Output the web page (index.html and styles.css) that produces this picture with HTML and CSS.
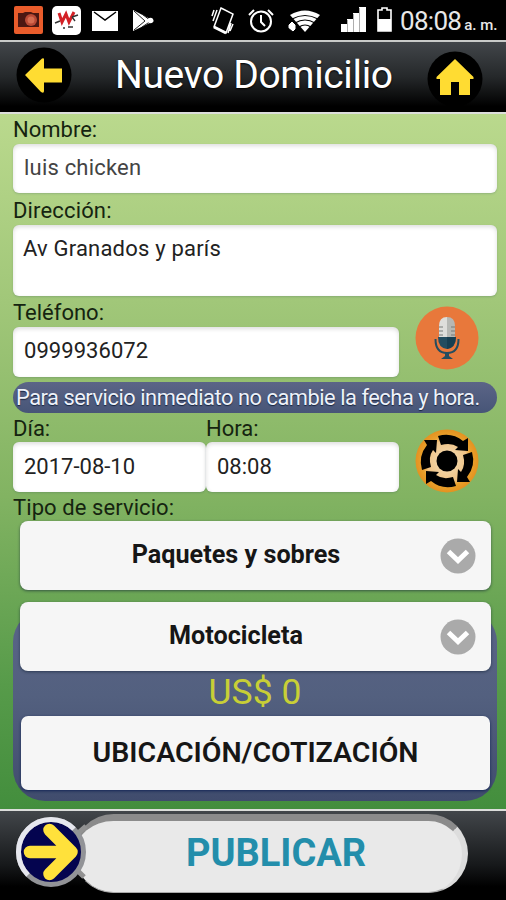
FILE: index.html
```html
<!DOCTYPE html>
<html lang="es">
<head>
<meta charset="utf-8">
<title>Nuevo Domicilio</title>
<link rel="stylesheet" href="styles.css">
</head>
<body>
<div class="app">
<div class="status">
  <svg class="status-icons" width="396" height="40" viewBox="0 0 396 40" aria-hidden="true">
    <rect x="14" y="6" width="29" height="28" rx="2" fill="#e95c2b"/>
    <path d="M18 13h5l2-1h6l2 1h6v14H18z" fill="#4c1712"/>
    <circle cx="31" cy="20" r="6" fill="#b94935"/><circle cx="31" cy="20" r="3.500" fill="#d66c51"/>
    <rect x="52" y="6" width="29" height="29" rx="5" fill="#fff"/>
    <path d="M59 13l3 9 4-8 3 8 5-10" fill="none" stroke="#d32026" stroke-width="3"/>
    <path d="M55 23l5-2M72 17l6-2M72 17l3 4M63 28h2M68 27h5" stroke="#333" stroke-width="1.400"/>
    <rect x="92" y="11" width="26" height="20" fill="#fff"/><path d="M94 12l11 8 11-8" fill="none" stroke="#000" stroke-width="1.500"/>
    <path d="M133 10v21l21-10z" fill="#fff"/><path d="M134 11l11 10-11 9M142 14l9 7-9 6" fill="none" stroke="#222" stroke-width="1"/><circle cx="150.500" cy="20.500" r="2.800" fill="#fff"/>
    <g fill="none" stroke="#fff" stroke-width="1.500"><path d="M221 8l12 6-7 19-12-6zM214 10l-2 6M217 10l-4 11M231 23l-3 10M233 24l-3 7"/><path d="M214 27l12 6" stroke-width="3"/></g>
    <g fill="none" stroke="#fff" stroke-width="2"><circle cx="261" cy="21.500" r="10"/><path d="M261 15v7l4 4M249 15l5-5M268 10l5 5"/></g>
    <path d="M290 15q15-9 30 0l-15 17z" fill="#fff"/><path d="M292 19q13-7 26 0M295 23q10-6 20 0M299 27q6-4 12 0" fill="none" stroke="#000" stroke-width="1.200"/>
    <path d="M288 25l4-4 4 4v4l-3 3-5-4z" fill="#fff" stroke="#000"/>
    <path d="M341 32v-8h6v8zm6 0V19h6v13zm6 0V13h6v19zm6 0V7h7v25z" fill="#fff"/><path d="M359.500 8v24M353.500 14v18M347.500 20v12" stroke="#777" stroke-width=".6"/>
    <path d="M378 10h4V8h5v2h4v21h-13z" fill="none" stroke="#fff" stroke-width="1.600"/><path d="M378 19h13v12h-13z" fill="#fff"/>
  </svg>
  <span class="clock">08:08</span><span class="ampm">a. m.</span>
</div>
<header class="header">
  <svg class="back" width="56" height="56" viewBox="0 0 56 56"><circle cx="28" cy="28" r="27.500" fill="#000"/><path d="M9 28L26 11.500q2-1 2 1V21.500h18v14H28v8.500q0 3-3 1z" fill="#ffdc32"/></svg>
  <h1 class="title">Nuevo Domicilio</h1>
  <svg class="home" width="56" height="56" viewBox="0 0 56 56"><circle cx="28" cy="28" r="27.500" fill="#000"/><path d="M28 8L9.500 26v2H13v16h11V31h8v13h11V28h3.500v-2z" fill="#ffdc32"/></svg>
</header>
<main class="form">
  <label class="label">Nombre:</label>
  <div class="field name"><span>luis chicken</span></div>
  <label class="label l-dir">Dirección:</label>
  <div class="field area"><span>Av Granados y parís</span></div>
  <div class="row phone-row">
    <div class="phone-col"><label class="label l-tel">Teléfono:</label><div class="field phone"><span>0999936072</span></div></div>
    <svg class="round mic" width="64" height="64" viewBox="0 0 64 64"><circle cx="32" cy="32" r="31.500" fill="#e8783b"/><path d="M24 31V20q0-9 8-9v20z" fill="#dededb"/><path d="M32 11q8 0 8 9v11h-8z" fill="#b6b8b4"/><path d="M24 21h4m-4 4h4m-4 4h4m8-8h4m-4 4h4m-4 4h4" stroke="#777b78"/><path d="M23 31h18q0 11-9 12-9-1-9-12z" fill="#234d60"/><path d="M32 31h9q-1 11-9 12z" fill="#173f52"/><path d="M20.500 33q0 14 11.500 14t11.500-14" fill="none" stroke="#234d60" stroke-width="2"/><path d="M30 46h4v4l4 3H26l4-3z" fill="#234d60"/></svg>
  </div>
  <div class="notice">Para servicio inmediato no cambie la fecha y hora.</div>
  <div class="row date-row">
    <div class="col"><label class="label l-date">Día:</label><div class="field date"><span>2017-08-10</span></div></div>
    <div class="col"><label class="label l-date">Hora:</label><div class="field time"><span>08:08</span></div></div>
    <svg class="round refresh" width="64" height="64" viewBox="0 0 64 64"><defs><radialGradient id="gold"><stop offset=".3" stop-color="#f2d3a3"/><stop offset=".65" stop-color="#eec285"/><stop offset=".8" stop-color="#e9a02b"/><stop offset="1" stop-color="#e39220"/></radialGradient><path id="turn" d="M23 7q14-4 25 5l5-3v13l-13-1 3-3q-7-5-17-2z"/></defs><circle cx="32" cy="32" r="31.500" fill="url(#gold)"/><use href="#turn"/><use href="#turn" transform="rotate(90 32 32)"/><use href="#turn" transform="rotate(180 32 32)"/><use href="#turn" transform="rotate(270 32 32)"/><circle cx="32" cy="32" r="10.500"/></svg>
  </div>
  <label class="label l-type">Tipo de servicio:</label>
  <div class="select"><span class="t-pack">Paquetes y sobres</span><svg class="chevron" width="36" height="36" viewBox="0 0 36 36"><circle cx="18" cy="18" r="17.500" fill="#aaa"/><path d="M8.500 13.500l9.500 9 9.500-9" fill="none" stroke="#fff" stroke-width="5"/></svg></div>
  <section class="quote">
    <div class="select moto"><span class="t-moto">Motocicleta</span><svg class="chevron" width="36" height="36" viewBox="0 0 36 36"><circle cx="18" cy="18" r="17.500" fill="#aaa"/><path d="M8.500 13.500l9.500 9 9.500-9" fill="none" stroke="#fff" stroke-width="5"/></svg></div>
    <div class="price"><span>US$ 0</span></div>
    <div class="locate"><span>UBICACIÓN/COTIZACIÓN</span></div>
  </section>
</main>
<footer class="footer">
  <div class="publish"><span>PUBLICAR</span></div>
  <svg class="go" width="90" height="80" viewBox="0 0 90 80"><path d="M63 22l9-8M63 58l7 7" stroke="#929292" stroke-width="5"/><circle cx="37" cy="40" r="32.500" fill="#04044f" stroke="#929397" stroke-width="5"/><path d="M14 63A32.500 32.500 0 0 1 60 17" fill="none" stroke="#e6e7ee" stroke-width="5"/><path d="M16 40h36M35.500 18l22 22-22 22" fill="none" stroke="#ffe13b" stroke-width="12.500" stroke-linejoin="round" stroke-linecap="round"/></svg>
</footer>
</div>
</body>
</html>
```
FILE: styles.css
```css
* { box-sizing: border-box; }
body { margin: 0; font-family: Roboto, "Liberation Sans", sans-serif; color: #152410; }
.app { width: 506px; height: 900px; overflow: hidden; background: #000; display: flex; flex-direction: column; white-space: nowrap; }
.status { height: 40px; flex: none; display: flex; align-items: baseline; color: #e8e8e8; position: relative; padding-left: 400px; }
.status-icons { position: absolute; left: 0; top: 0; }
.clock { font-size: 26px; line-height: 43px; letter-spacing: -.7px; }
.ampm { font-size: 15px; letter-spacing: 0; margin-left: 3px; font-weight: 500; }
.header { height: 74px; flex: none; display: flex; align-items: flex-start; border-top: 2px solid #c9cbc9; border-bottom: 2px solid #dcdedb; background: linear-gradient(#42464a, #25282a 50%, #000 92%); color: #fff; padding-left: 16px; }
.back { margin-top: 5px; }
.title { width: 278px; margin: 0 0 0 43px; font-size: 39px; line-height: 66px; font-weight: 400; letter-spacing: -.35px; text-shadow: 0 1px 2px #000; }
.home { margin: 9px 0 0 34px; }
.form { height: 695px; flex: none; padding: 0 9px 0 13px; background: linear-gradient(#bad98d, #a1c779 27%, #82b362 55%, #579b4a 82%, #438e3d); }
.label { display: block; height: 30px; line-height: 31px; font-size: 22px; padding-left: 0; }
.l-dir { height: 32px; line-height: 35px; letter-spacing: .15px; }
.l-tel { height: 31px; line-height: 34px; }
.l-date { height: 29px; line-height: 32px; }
.l-type { height: 29px; line-height: 32px; letter-spacing: .08px; }
.field { background: #fff; border-radius: 6px; color: #222; font-size: 22px; padding-left: 11px; box-shadow: inset 0 2px 4px #0002, 0 1px 2px #2453; }
.name { height: 49px; line-height: 47px; letter-spacing: .2px; color: #444; }
.area { height: 71px; line-height: 47px; padding-left: 10px; letter-spacing: .2px; }
.phone { width: 386px; height: 50px; line-height: 47px; letter-spacing: .05px; }
.row { display: flex; }
.phone-row { height: 86px; }
.phone-col { width: 386px; }
.round { flex: none; margin-left: 16px; }
.mic { margin-top: 10px; }
.notice { height: 31px; line-height: 31px; border-radius: 16px; background: linear-gradient(#5b6587, #475577); color: #eef2fa; font-size: 21.800px; letter-spacing: -.45px; padding-left: 3px; text-shadow: 0 1px 1px #17243f; }
.date-row { height: 79px; }
.col { width: 193px; }
.date, .time { height: 50px; line-height: 49px; }
.refresh { margin-top: 16px; }
.select { width: 471px; height: 69px; margin-left: 7px; border-radius: 8px; background: #f6f6f6; color: #161616; box-shadow: 0 1px 3px #1239; display: flex; align-items: center; justify-content: center; font-weight: 700; font-size: 25.200px; position: relative; }
.chevron { position: absolute; right: 15px; top: 17px; }
.select span { padding-bottom: 2px; padding-right: 39px; }
.quote { height: 191px; margin-top: 20px; border-radius: 32px; background: linear-gradient(#596487, #53607f 45%, #404c6d); }
.moto { margin-top: 0; top: -8px; }
.price { height: 39px; margin-top: -2px; line-height: 31px; text-align: center; font-size: 35.500px; color: #c8cf36; }
.locate { width: 469px; height: 74px; margin-left: 8px; border-radius: 7px; background: #f6f6f6; color: #161616; font-weight: 600; font-size: 28.500px; line-height: 74px; text-align: center; box-shadow: 0 1px 3px #142655; }
.footer { height: 91px; flex: none; border-top: 2px solid #dcdedb; background: linear-gradient(#42464a, #17191b 60%, #000 85%); position: relative; padding: 3px 0 0 74px; }
.publish { width: 394px; height: 79px; border: 1px solid #aaa; border-top: 7px solid #8b8b8b; border-right: 6px solid #ddd; border-radius: 40px; background: #e9e9e9; color: #238eab; font-weight: 700; font-size: 38px; line-height: 64px; padding-left: 111px; }
.go { position: absolute; left: 14px; top: 1px; }
```
